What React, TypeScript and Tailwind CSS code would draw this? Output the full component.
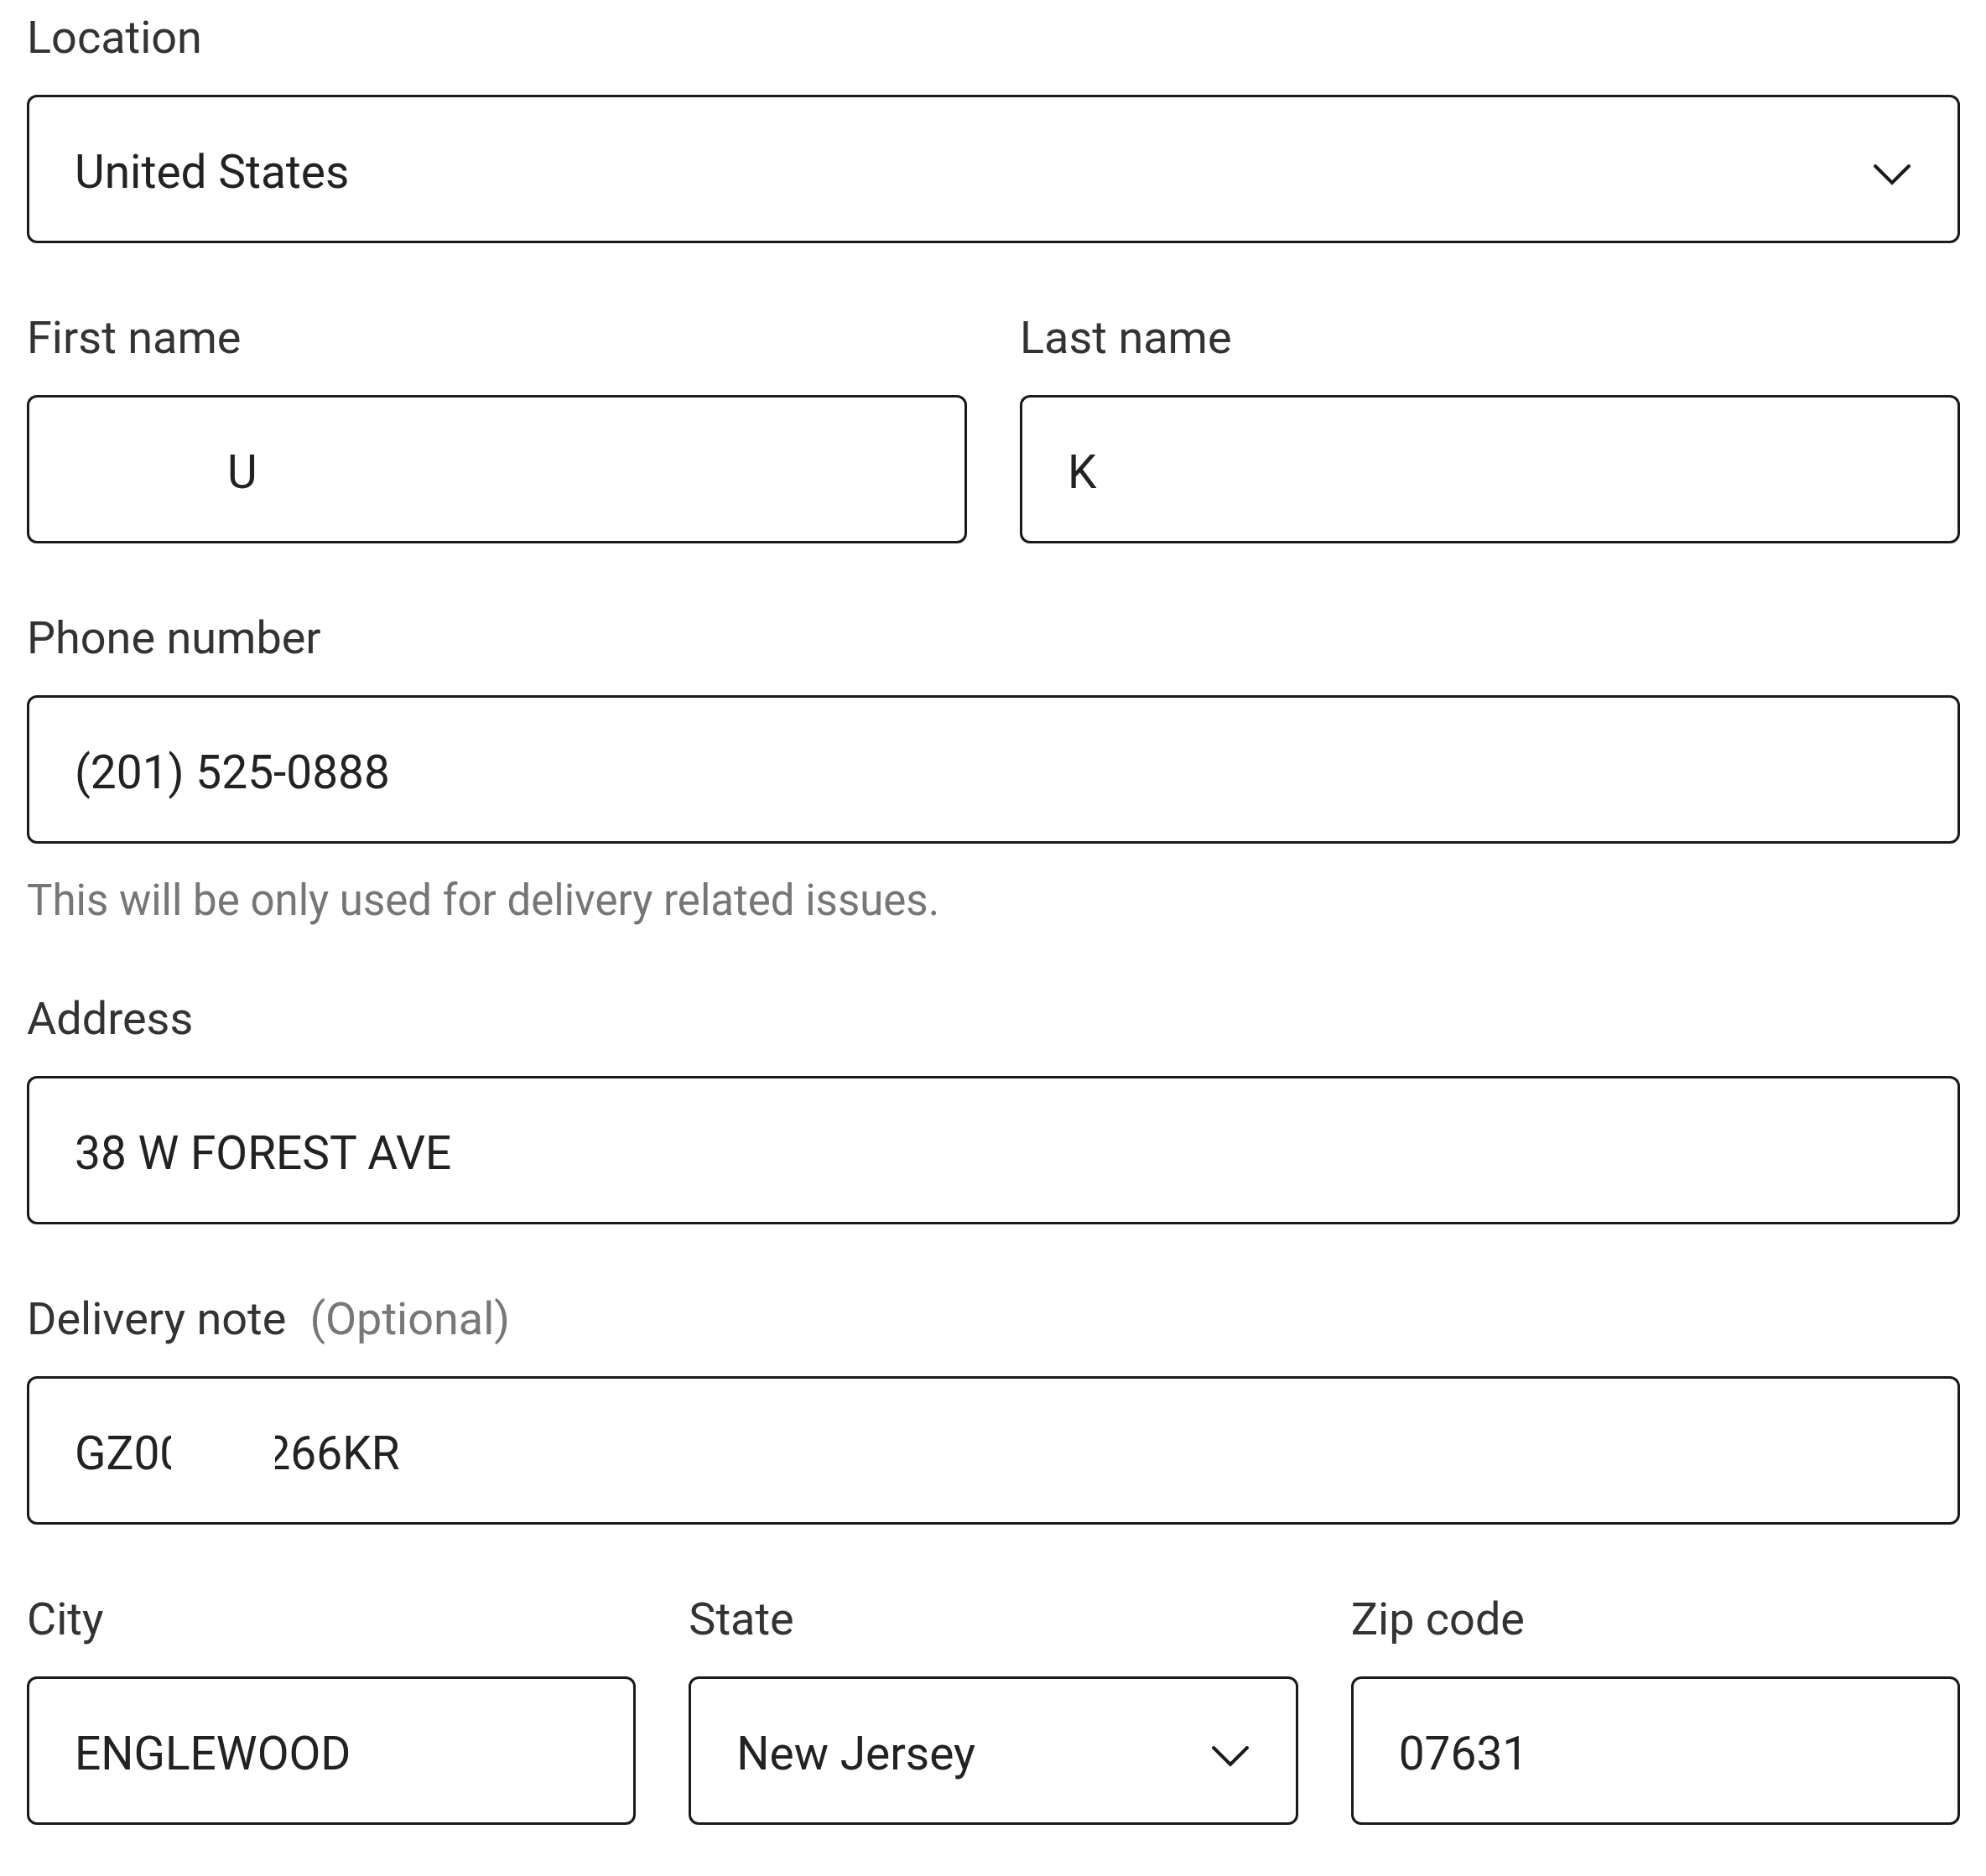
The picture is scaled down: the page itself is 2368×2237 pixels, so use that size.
import type { ReactNode } from 'react';

function Chevron() {
  return (
    <svg width="48" height="28" viewBox="0 0 48 28" fill="none" className="shrink-0 mt-[12px]">
      <path d="M4 4 L24 24 L44 4" stroke="#1a1a1a" strokeWidth="4" strokeLinecap="round" strokeLinejoin="miter" />
    </svg>
  );
}

function Label({ children }: { children: ReactNode }) {
  return <div className="text-[54px] leading-[62px] text-[#333]">{children}</div>;
}

function Box({ children, select = false }: { children?: ReactNode; select?: boolean }) {
  return (
    <div
      className={`mt-[37px] h-[177px] border-[3px] border-[#1a1a1a] rounded-[12px] flex items-center pl-[54px] text-[55px] text-[#222] ${
        select ? 'justify-between pr-[54px]' : 'pr-[40px]'
      }`}
    >
      {children}
    </div>
  );
}

function Field({ label, children, select, helper }: { label: ReactNode; children?: ReactNode; select?: boolean; helper?: string }) {
  return (
    <div className="min-w-0">
      <Label>{label}</Label>
      <Box select={select}>
        <div className="mt-[8px] flex items-center">{children}</div>
        {select && <Chevron />}
      </Box>
      {helper && <div className="mt-[40px] text-[51px] leading-[56px] text-[#767676]">{helper}</div>}
    </div>
  );
}

export default function App() {
  return (
    <div className="min-h-screen bg-white font-[Roboto,sans-serif] px-[32px] pr-[31px] pt-[14px] flex flex-col gap-[82px]">
      <Field label="Location" select>
        <span>United States</span>
      </Field>

      <div className="grid grid-cols-2 gap-[63px]">
        <Field label="First name">
          <span className="ml-[182px]">U</span>
        </Field>
        <Field label="Last name">
          <span>K</span>
        </Field>
      </div>

      <Field label="Phone number" helper="This will be only used for delivery related issues.">
        <span>(201) 525-0888</span>
      </Field>

      <Field label="Address">
        <span>38 W FOREST AVE</span>
      </Field>

      <Field
        label={
          <>
            Delivery note<span className="ml-[28px] text-[#777]">(Optional)</span>
          </>
        }
      >
        {/* Teil der Notiz ist geschwärzt */}
        <span>GZ0</span>
        <span className="inline-block w-[14px] overflow-hidden">0</span>
        <span className="inline-block w-[124px]" />
        <span className="inline-flex justify-end w-[18px] overflow-hidden">2</span>
        <span>66KR</span>
      </Field>

      <div className="grid grid-cols-3 gap-[63px]">
        <Field label="City">
          <span>ENGLEWOOD</span>
        </Field>
        <Field label="State" select>
          <span>New Jersey</span>
        </Field>
        <Field label="Zip code">
          <span>07631</span>
        </Field>
      </div>
    </div>
  );
}
